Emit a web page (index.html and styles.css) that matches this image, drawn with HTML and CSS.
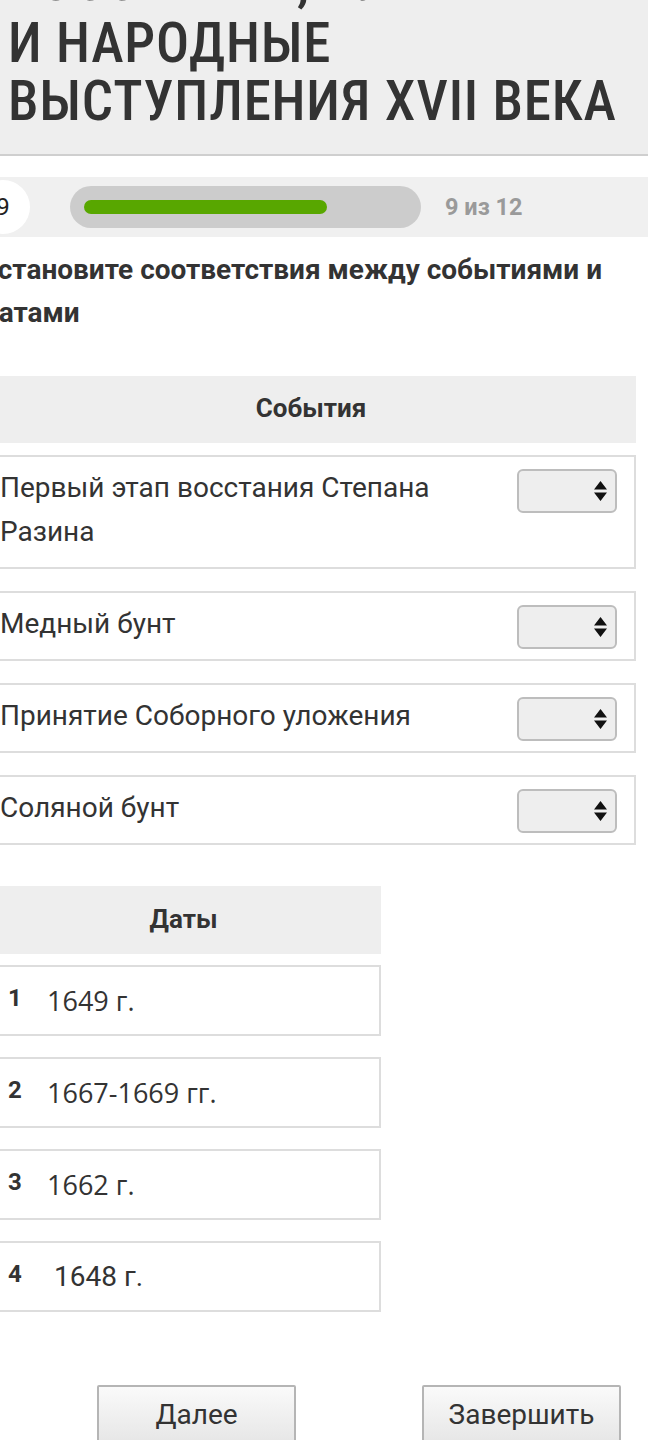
FILE: index.html
```html
<!DOCTYPE html>
<html lang="ru">
<head>
<meta charset="utf-8">
<title>Тест</title>
<link rel="stylesheet" href="styles.css">
</head>
<body>
<div class="page">
  <header class="title-bar">
    <h1 class="title"><span class="title-line title-line-cut">ВОССТАНИЯ, БУНТЫ</span><span class="title-line">И НАРОДНЫЕ</span><span class="title-line">ВЫСТУПЛЕНИЯ XVII ВЕКА</span></h1>
  </header>

  <div class="progress-strip">
    <div class="q-num">9</div>
    <div class="track"><div class="fill" style="width:243px"></div></div>
    <div class="count">9 из 12</div>
  </div>

  <p class="question">Установите соответствия между событиями и<br>датами</p>

  <section class="events">
    <div class="table-head">События</div>
    <div class="event-row">
      <div class="event-text">Первый этап восстания Степана<br>Разина</div>
      <div class="select"><svg width="13" height="20" viewBox="0 0 13 20"><path d="M6.5 0 L13 8.5 L0 8.5 Z M0 11.5 L13 11.5 L6.5 20 Z" fill="#111"/></svg></div>
    </div>
    <div class="event-row">
      <div class="event-text">Медный бунт</div>
      <div class="select"><svg width="13" height="20" viewBox="0 0 13 20"><path d="M6.5 0 L13 8.5 L0 8.5 Z M0 11.5 L13 11.5 L6.5 20 Z" fill="#111"/></svg></div>
    </div>
    <div class="event-row">
      <div class="event-text">Принятие Соборного уложения</div>
      <div class="select"><svg width="13" height="20" viewBox="0 0 13 20"><path d="M6.5 0 L13 8.5 L0 8.5 Z M0 11.5 L13 11.5 L6.5 20 Z" fill="#111"/></svg></div>
    </div>
    <div class="event-row">
      <div class="event-text">Соляной бунт</div>
      <div class="select"><svg width="13" height="20" viewBox="0 0 13 20"><path d="M6.5 0 L13 8.5 L0 8.5 Z M0 11.5 L13 11.5 L6.5 20 Z" fill="#111"/></svg></div>
    </div>
  </section>

  <section class="dates">
    <div class="table-head">Даты</div>
    <div class="date-row"><span class="num">1</span><span class="date">1649 г.</span></div>
    <div class="date-row"><span class="num">2</span><span class="date">1667-1669 гг.</span></div>
    <div class="date-row"><span class="num">3</span><span class="date">1662 г.</span></div>
    <div class="date-row"><span class="num">4</span><span class="date date-alt">1648 г.</span></div>
  </section>

  <div class="buttons">
    <button class="btn">Далее</button>
    <button class="btn">Завершить</button>
  </div>
</div>
</body>
</html>
```

FILE: styles.css
```css
html, body {
  margin: 0;
  padding: 0;
  overflow-x: hidden;
  background: #fff;
}
body {
  font-family: Roboto, "Liberation Sans", sans-serif;
  color: #333;
}
.page {
  margin-left: -14px;
  width: 662px;
}

/* Title */
.title-bar {
  background: #eeeeee;
  border-bottom: 2px solid #cfcfcf;
  padding: 0 0 23px 22px;
  overflow: hidden;
  height: 131px;
}
.title {
  margin: -48px 0 0 0;
  font-weight: 500;
  font-size: 55px;
  line-height: 58px;
  font-stretch: 80%;
  letter-spacing: 0.8px;
  color: #333;
  white-space: nowrap;
}
.title-line {
  display: block;
}
.title-line-cut {
  margin-bottom: 4px;
}

/* Progress */
.progress-strip {
  margin-top: 21px;
  height: 60px;
  background: #f0f0f0;
  display: flex;
  align-items: center;
  width: 662px;
}
.q-num {
  width: 54px;
  height: 54px;
  margin-left: -10px;
  border-radius: 50%;
  background: #fff;
  display: flex;
  align-items: center;
  justify-content: center;
  font-size: 24px;
  color: #222;
  flex: none;
}
.track {
  margin-left: 40px;
  width: 351px;
  height: 42px;
  box-sizing: border-box;
  padding: 14px;
  border-radius: 21px;
  background: #cccccc;
  flex: none;
}
.fill {
  height: 14px;
  border-radius: 7px;
  background: #58a700;
}
.count {
  margin-left: 24px;
  font-size: 23.5px;
  font-weight: 700;
  color: #9a9a9a;
}

/* Question */
.question {
  margin: 11px 0 0 -5px;
  font-size: 28px;
  font-weight: 700;
  line-height: 43px;
  color: #333;
  white-space: nowrap;
}

/* Tables */
.table-head {
  background: #eeeeee;
  font-weight: 700;
  font-size: 26px;
  color: #333;
  text-align: center;
}
.events {
  margin-top: 42px;
  width: 650px;
  display: flex;
  flex-direction: column;
  gap: 22px;
}
.events .table-head {
  height: 67px;
  line-height: 65px;
  margin-bottom: -10px;
}
.event-row {
  border: 2px solid #dddddd;
  padding: 12px 17px 0 12px;
  display: flex;
  align-items: flex-start;
}
.event-text {
  flex: 1;
  margin: -3px 0 13px 0;
  font-size: 28px;
  line-height: 44px;
  color: #333;
}
.select {
  width: 100px;
  height: 44px;
  box-sizing: border-box;
  border: 2px solid #bdbdbd;
  border-radius: 6px;
  background: #eeeeee;
  display: flex;
  align-items: center;
  justify-content: flex-end;
  padding-right: 8px;
  flex: none;
}

.dates {
  margin-top: 41px;
  width: 395px;
  display: flex;
  flex-direction: column;
  gap: 21px;
}
.dates .table-head {
  height: 68px;
  line-height: 66px;
  margin-bottom: -10px;
}
.date-row {
  border: 2px solid #dddddd;
  height: 71px;
  box-sizing: border-box;
  display: flex;
  align-items: center;
  padding-left: 20px;
}
.num {
  width: 39px;
  font-size: 24px;
  font-weight: 700;
  color: #333;
  margin-top: -6px;
}
.date {
  font-family: "Open Sans", Roboto, sans-serif;
  font-size: 27px;
  color: #333;
}
.date-alt {
  font-family: Roboto, sans-serif;
  font-size: 28px;
  margin-left: 7px;
}

/* Buttons */
.buttons {
  margin-top: 73px;
  padding-left: 111px;
  display: flex;
  gap: 126px;
}
.btn {
  width: 199px;
  height: 60px;
  box-sizing: border-box;
  border: 2px solid #b5b5b5;
  border-radius: 2px;
  background: linear-gradient(#fafafa, #e6e6e6);
  font-family: Roboto, sans-serif;
  font-size: 28px;
  color: #333;
  padding: 0 0 2px 0;
}
```
